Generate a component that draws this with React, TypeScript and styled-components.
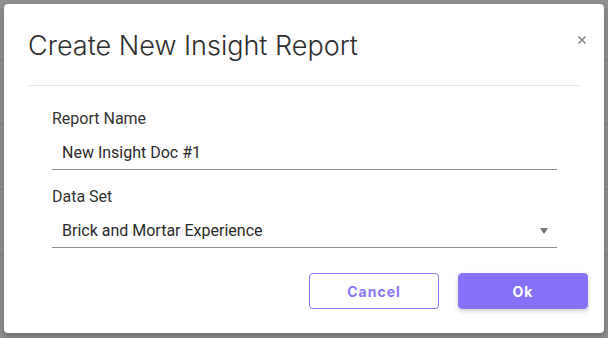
import * as React from "react";
import styled, { createGlobalStyle } from "styled-components";

const GlobalStyle = createGlobalStyle`
  html, body {
    margin: 0;
    padding: 0;
    width: 608px;
    height: 338px;
    overflow: hidden;
    font-family: Inter, "Noto Sans", sans-serif;
  }
`;

const Page = styled.div`
  position: relative;
  width: 608px;
  height: 338px;
  background: #8f8f8f;
`;

const BackRows = styled.div`
  display: flex;
  flex-direction: column;
  padding-top: 59px;
`;

const BackRow = styled.div`
  height: 64px;
  border-top: 1px solid #7e7e7e;
`;

const Overlay = styled.div`
  position: absolute;
  inset: 0;
  padding: 4px 4px 5px 4px;
  box-sizing: border-box;
  display: flex;
`;

const Dialog = styled.div`
  position: relative;
  flex: 1;
  background: #fff;
  border-radius: 4px;
  box-shadow: 0 3px 6px rgba(0, 0, 0, 0.25);
  padding: 0 23px 0 24px;
  display: flex;
  flex-direction: column;
`;

const Title = styled.h2`
  margin: 24px 0 0 0;
  font-size: 27px;
  line-height: 36px;
  font-weight: 300;
  color: #2e2e2e;
  padding-bottom: 21px;
  border-bottom: 1px solid #e6e6e6;
`;

const Close = styled.button`
  position: absolute;
  top: 29px;
  right: 15px;
  border: none;
  background: none;
  padding: 0;
  width: 14px;
  height: 14px;
  cursor: pointer;
`;

const Form = styled.div`
  display: flex;
  flex-direction: column;
  padding: 0 24px;
`;

const Field = styled.div<{ $top: number }>`
  display: flex;
  flex-direction: column;
  margin-top: ${(p) => p.$top}px;
`;

const Label = styled.label`
  font-family: Roboto, "Liberation Sans", sans-serif;
  font-size: 16px;
  line-height: 20px;
  color: #333;
`;

const Control = styled.div`
  display: flex;
  align-items: center;
  justify-content: space-between;
  height: 33px;
  margin-top: 7px;
  padding: 0 9px 0 10px;
  border-bottom: 1px solid #8c8c8c;
  font-family: Roboto, "Liberation Sans", sans-serif;
  font-size: 16px;
  color: #2a2a2a;
`;

const Caret = styled.span`
  width: 0;
  height: 0;
  border-left: 4px solid transparent;
  border-right: 4px solid transparent;
  border-top: 6px solid #777;
`;

const Actions = styled.div`
  display: flex;
  justify-content: flex-end;
  gap: 19px;
  margin-top: 25px;
  margin-right: -31px;
`;

const Button = styled.button<{ $primary?: boolean }>`
  width: 130px;
  height: 36px;
  border-radius: 4px;
  box-sizing: border-box;
  font-family: Inter, "Noto Sans", sans-serif;
  font-size: 14px;
  font-weight: 700;
  letter-spacing: 1px;
  cursor: pointer;
  border: 1px solid #8a77f6;
  color: ${(p) => (p.$primary ? "#fff" : "#8a77f6")};
  background: ${(p) => (p.$primary ? "#8671fb" : "#fff")};
  box-shadow: ${(p) => (p.$primary ? "0 2px 4px rgba(0,0,0,0.2)" : "none")};
`;

const App: React.FC = () => {
  return (
    <Page>
      <GlobalStyle />
      <BackRows>
        {[0, 1, 2, 3].map((i) => (
          <BackRow key={i} />
        ))}
      </BackRows>
      <Overlay>
        <Dialog>
          <Title>Create New Insight Report</Title>
          <Close aria-label="Close">
            <svg width="14" height="14" viewBox="0 0 14 14">
              <path d="M3.5 3.5 L10.5 10.5 M10.5 3.5 L3.5 10.5" stroke="#7a7a7a" strokeWidth="1.4" />
            </svg>
          </Close>
          <Form>
            <Field $top={23}>
              <Label>Report Name</Label>
              <Control>New Insight Doc #1</Control>
            </Field>
            <Field $top={17}>
              <Label>Data Set</Label>
              <Control>
                Brick and Mortar Experience
                <Caret />
              </Control>
            </Field>
            <Actions>
              <Button>Cancel</Button>
              <Button $primary>Ok</Button>
            </Actions>
          </Form>
        </Dialog>
      </Overlay>
    </Page>
  );
};

export default App;
